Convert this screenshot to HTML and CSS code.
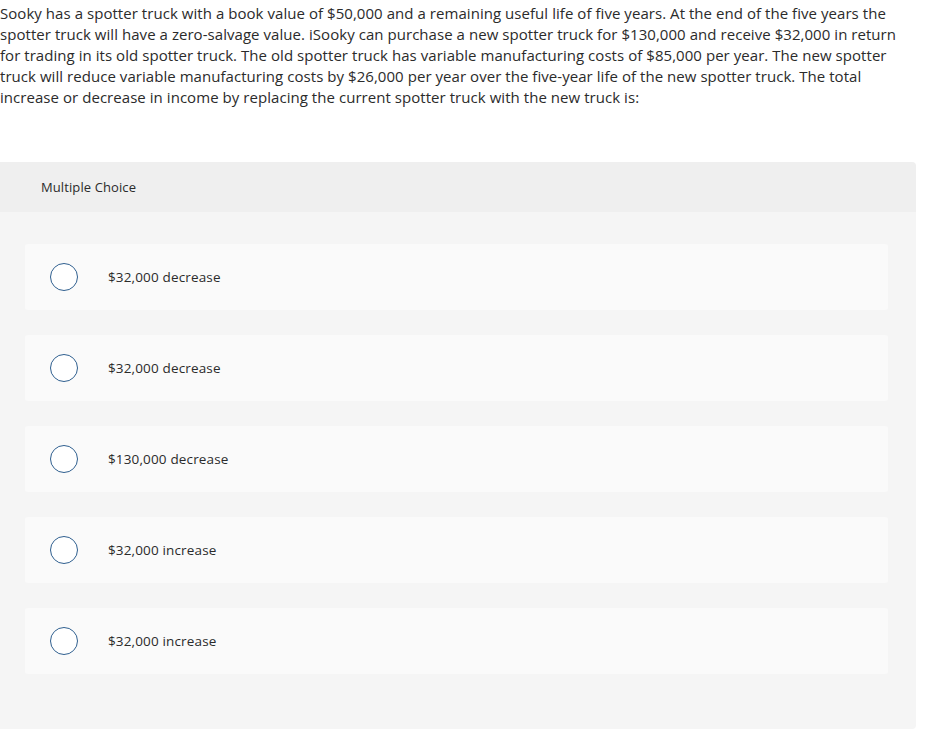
FILE: index.html
```html
<!DOCTYPE html>
<html>
<head>
<meta charset="utf-8">
<link rel="stylesheet" href="styles.css">
</head>
<body>
<div class="page">
  <p class="question">Sooky has a spotter truck with a book value of $50,000 and a remaining useful life of five years. At the end of the five years the spotter truck will have a zero-salvage value. iSooky can purchase a new spotter truck for $130,000 and receive $32,000 in return for trading in its old spotter truck. The old spotter truck has variable manufacturing costs of $85,000 per year. The new spotter truck will reduce variable manufacturing costs by $26,000 per year over the five-year life of the new spotter truck. The total increase or decrease in income by replacing the current spotter truck with the new truck is:</p>
  <div class="panel">
    <div class="panel-head">Multiple Choice</div>
    <div class="panel-body">
      <div class="option"><span class="radio"></span><span class="label">$32,000 decrease</span></div>
      <div class="option"><span class="radio"></span><span class="label">$32,000 decrease</span></div>
      <div class="option"><span class="radio"></span><span class="label">$130,000 decrease</span></div>
      <div class="option"><span class="radio"></span><span class="label">$32,000 increase</span></div>
      <div class="option"><span class="radio"></span><span class="label">$32,000 increase</span></div>
    </div>
  </div>
</div>
</body>
</html>
```
FILE: styles.css
```css
html, body {
  margin: 0;
  padding: 0;
  background: #ffffff;
}
body {
  font-family: "Open Sans", Lato, sans-serif;
  color: #2b2b2b;
}
.page {
  width: 916px;
}
.question {
  margin: 0;
  padding-top: 3px;
  font-size: 15px;
  letter-spacing: 0.05px;
  line-height: 21px;
  width: 912px;
}
.panel {
  margin-top: 54px;
  width: 916px;
}
.panel-head {
  background: #efefef;
  height: 50px;
  display: flex;
  align-items: center;
  padding-left: 41px;
  font-size: 13px;
  letter-spacing: 0.1px;
  border-top-right-radius: 4px;
}
.panel-body {
  background: #f5f5f5;
  padding: 32px 28px 55px 25px;
  display: flex;
  flex-direction: column;
  gap: 25px;
  border-bottom-right-radius: 4px;
}
.option {
  background: #fafafa;
  height: 66px;
  border-radius: 3px;
  display: flex;
  align-items: center;
  padding-left: 25px;
}
.radio {
  width: 26px;
  height: 26px;
  border: 1.5px solid #2f5f8f;
  border-radius: 50%;
  background: #fff;
  flex: none;
}
.label {
  margin-left: 30px;
  font-size: 13.5px;
  letter-spacing: 0.15px;
}
```
